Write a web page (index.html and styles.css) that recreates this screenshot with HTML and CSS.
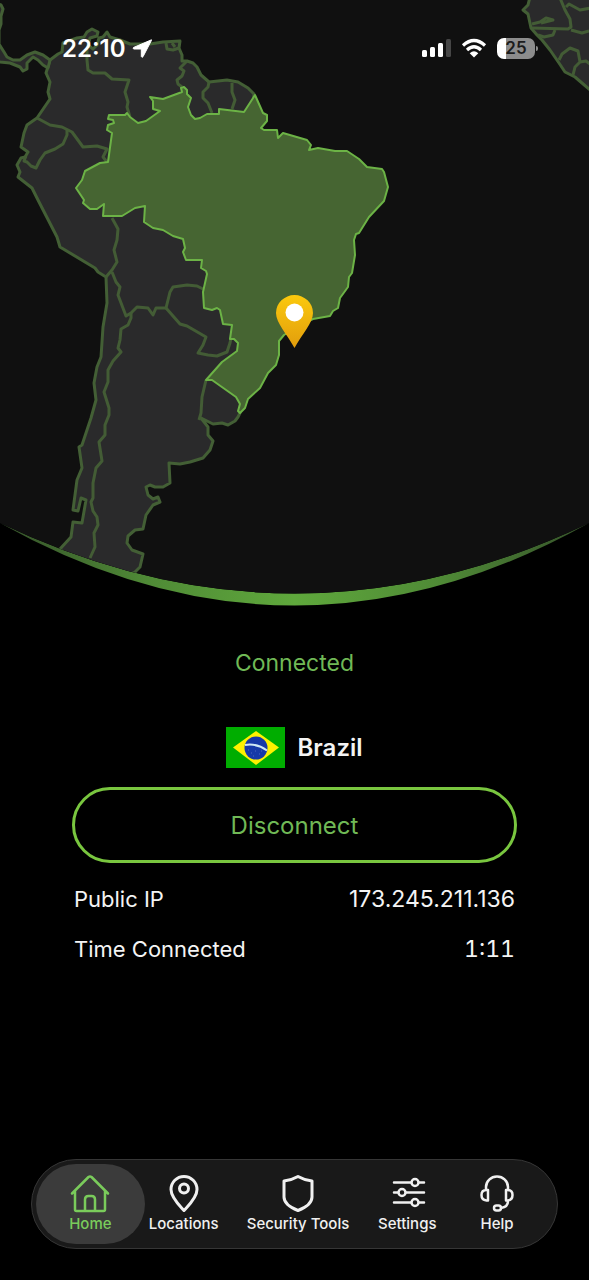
FILE: index.html
```html
<!DOCTYPE html>
<html lang="en">
<head>
    <meta charset="UTF-8">
    <meta name="viewport" content="width=device-width, initial-scale=1.0">
    <title>VPN</title>
    <link rel="stylesheet" href="styles.css">
</head>
<body>
    <header class="hero">
        <svg class="map" viewBox="0 0 589 606" aria-hidden="true">
            <defs>
                <clipPath id="dome">
                    <path d="M0 0H589V523Q294.500 664 0 523Z"/>
                </clipPath>
                <linearGradient id="rim" x1="0" x2="1" y1="0" y2="0">
                    <stop offset="0" stop-color="#35512a"/>
                    <stop offset=".25" stop-color="#4f8a36"/>
                    <stop offset=".5" stop-color="#5fa83c"/>
                    <stop offset=".75" stop-color="#4f8a36"/>
                    <stop offset="1" stop-color="#35512a"/>
                </linearGradient>
                <linearGradient id="gold" x1="0" x2="0" y1="0" y2="1">
                    <stop offset="0" stop-color="#fbc90d"/>
                    <stop offset="1" stop-color="#e29d0c"/>
                </linearGradient>
            </defs>
            <path class="rim" d="M0 523Q294.500 664 589 523Q294.500 688 0 523Z"/>
            <g clip-path="url(#dome)">
                <path class="sea" d="M0 0H589V606H0Z"/>
                <!-- mainland -->
                <path class="land" d="M50 60L58 54L62 52L63 43L77 38L84 37L87 32L92 29L98 32L97 36L90 38L88 45L93 49L97 45L99 38L103 37L107 32L110 37L120 40L130 44L150 44L163 42L180 41L179 48L182 55L182 61L187 61L193 63L197 67L201 75L209 82L218 81L227 80L238 82L248 88L254 94L250 130L240 413L238 417L235 421L228 425L222 423L213 424L207 421L201 418L208 427L208 435L213 441L210 450L203 458L190 462L180 464L169 463L170 483L163 487L155 487L150 485L146 487L148 495L153 499L158 497L160 502L153 505L146 515L143 529L135 530L128 536L127 543L132 550L143 554L140 567L135 572L100 590L60 549L71 537L73 522L82 523L86 500L81 498L78 511L73 510L77 480L82 468L79 447L82 445L91 418L96 400L94 383L97 367L101 357L103 327L107 303L106 277L98 272L95 268L60 247L57 237L38 200L32 188L18 177L20 172L17 165L21 158L25 157L28 152L21 147L24 133L27 125L37 118L50 99L48 92L50 82L46 73Z"/>
                <!-- Panama -->
                <path class="land" d="M-5 3L1 5L3 9L1 16L1 24L-1 30L-1 44L4 52L7 57L13 60L20 60L27 55L35 52L43 55L50 60L48 68L43 65L38 60L33 57L27 63L27 69L23 71L20 67L10 63L0 62L-5 60Z"/>
                <!-- West Africa -->
                <path class="land" d="M530 -3L528 5L523 10L528 14L531 28L537 35L542 40L550 50L559 63L565 72L575 77L582 83L595 94V-3Z"/>
                <g class="border">
                    <path d="M87 49L87 60L88 70L93 73L105 73L112 79L129 80L125 92L128 102L127 107L130 117"/>
                    <path d="M37 118L50 125L62 127L72 132L83 147L97 146L107 149L103 157L107 162"/>
                    <path d="M67 129L67 135L63 144L55 149L45 153L40 160L36 168L31 166L27 162L24 161L26 156"/>
                    <path d="M187 61L180 68L184 71L182 76L177 80L178 84L182 87"/>
                    <path d="M209 82L208 87L203 92L203 98L208 103L212 113"/>
                    <path d="M232 83L232 92L235 100L232 109"/>
                    <path d="M166 43L167 49L173 50L179 48M172 43L175 47"/>
                    <path d="M112 218L118 229L117 240L114 250L117 262L112 270L106 277"/>
                    <path d="M112 272L116 282L120 287L118 295L126 316L131 313L137 307L148 308L153 315L156 308L166 308L170 292L173 287L187 285L197 286L203 289"/>
                    <path d="M166 308L180 324L187 326L206 337L203 345L198 353L208 355L217 356L227 352L230 343L231 338"/>
                    <path d="M206 380L202 397L201 413L199 420"/>
                    <path d="M131 313L131 318L128 325L121 329L120 340L118 348L121 352L113 361L108 370L108 382L104 392L109 408L109 415L105 425L105 435L99 442L102 461L96 468L93 483L93 498L91 502L93 511L97 517L98 525L94 533L95 547L90 558"/>
                    <path d="M560 -2L565 10L570 19L571 27L568 29L532 28M571 30L582 33L589 31M566 7L569 4L580 10L591 8"/>
                    <path d="M532 24L540 22L546 18L553 20L541 23M538 35L544 37L553 35L555 30"/>
                    <path d="M559 60L562 54L570 48L578 51L580 62L575 67L573 75M580 62L586 61L591 65"/>
                </g>
                <!-- Brazil -->
                <path class="active" d="M150 97L163 99L182 92L181 88L184 87L187 90L187 94L191 98L188 107L191 115L195 119L200 118L207 114L219 114L219 109L244 112L255 95L263 113L267 115L267 121L261 128L264 130L277 130L278 138L283 133L307 140L311 145L309 150L318 148L335 151L347 151L359 159L367 167L382 169L384 172L388 187L384 201L369 217L359 233L356 234L354 240L355 255L352 273L349 277L348 287L340 298L338 308L333 311L330 316L313 319L300 325L284 335L279 341L279 355L276 365L268 373L260 388L248 399L245 408L240 413L238 411L240 404L236 397L212 380L206 380L222 362L237 351L238 343L234 339L230 339L232 325L223 324L220 310L217 308L212 310L204 308L203 292L205 283L207 274L206 271L201 268L202 260L186 260L183 252L185 248L183 239L173 236L163 230L153 228L144 222L145 206L135 208L122 216L103 216L104 204L97 209L90 209L83 203L84 200L76 188L82 180L85 171L100 163L108 162L112 133L107 130L108 125L114 123L113 120L108 119L109 115L125 115L127 113L130 117L138 123L146 121L160 111L153 109L153 101Z"/>
            </g>
            <path class="pin" d="M294.500 348C287 334 276 323 276 313A18.500 18 0 0 1 313 313C313 323 302 334 294.500 348Z"/>
            <circle cx="294.500" cy="312.500" r="9" fill="#fff"/>
        </svg>
        <div class="status">
            <div class="clock">
                <span>22:10</span>
                <svg width="20" height="20" viewBox="0 0 20 20"><path d="M19 2L1.500 9.500Q.5 10.800 2 11H9.300V18.500Q9.800 20 11 18.700L19.500 2.300Q19.800 1.500 19 2Z" fill="#fff" stroke="#fff"/></svg>
            </div>
            <div class="signals">
                <svg width="30" height="20" viewBox="0 0 30 20" fill="#fff">
                    <rect x="1" y="12" width="5" height="7" rx="1.500"/>
                    <rect x="9" y="9" width="5" height="10" rx="1.500"/>
                    <rect x="17" y="5" width="5" height="14" rx="1.500"/>
                    <rect x="25" y="1" width="5" height="18" rx="1.500" fill="#464646"/>
                </svg>
                <svg width="26" height="20" viewBox="0 0 26 20" fill="none" stroke="#fff" stroke-width="3.200">
                    <path d="M2 7.500Q13-2.500 24 7.500M6 12Q13 5.500 20 12"/>
                    <path d="M13 19.500L8.700 15.200Q13 11.500 17.300 15.200Z" fill="#fff" stroke="none"/>
                </svg>
                <span class="battery">25</span>
            </div>
        </div>
    </header>

    <main class="panel">
        <p class="state">Connected</p>
        <div class="country">
            <svg class="flag" viewBox="0 0 59 41" aria-hidden="true">
                <path d="M0 0H59V41H0Z" fill="#00ad00"/>
                <path d="M7 20.500L30 4L53 20.500L30 38Z" fill="#fdf100"/>
                <circle cx="30" cy="21" r="11.500" fill="#1639a8"/>
                <path d="M19 18Q31 16 41 23.500" fill="none" stroke="#cfe8f4" stroke-width="2"/>
                <path d="M22 23h1M25 26h1M29 24h1M33 27h1M27 29h1M35 24h1" stroke="#4a68c4"/>
            </svg>
            <h1>Brazil</h1>
        </div>
        <button class="disconnect" type="button">Disconnect</button>
        <dl class="details">
            <div class="row"><dt>Public IP</dt><dd>173.245.211.136</dd></div>
            <div class="row"><dt>Time Connected</dt><dd class="timer">1:11</dd></div>
        </dl>
    </main>

    <nav class="tabs">
        <a class="tab current" href="#home">
            <svg viewBox="0 0 40 40"><path d="M2 20.500L18.500 4Q20 3 21.500 4L38 20.500M5 18V36.500Q5 38 6.500 38H33.500Q35 38 35 36.500V18M15 38V26.500Q15 23 18.500 23H21.500Q25 23 25 26.500V38"/></svg>
            <span>Home</span>
        </a>
        <a class="tab" href="#locations">
            <svg viewBox="0 0 40 40"><path class="bold" d="M20 37.500C17 34 7 25 7 16.500A13 13 0 0 1 33 16.500C33 25 23 34 20 37.500Z"/><circle class="bold" cx="20" cy="15.500" r="4.500"/></svg>
            <span>Locations</span>
        </a>
        <a class="tab" href="#security">
            <svg viewBox="0 0 40 40"><path class="bold" d="M20 3.500Q26 7 34 8V24Q34 32 20 37.500Q6 32 6 24V8Q14 7 20 3.500Z"/></svg>
            <span>Security Tools</span>
        </a>
        <a class="tab" href="#settings">
            <svg viewBox="0 0 40 40"><path d="M7 9.500H24M32 9.500H37M7 19.500H11M19 19.500H37M7 29.500H24M32 29.500H37"/><circle cx="28" cy="9.500" r="3.500"/><circle cx="15" cy="19.500" r="3.500"/><circle cx="28" cy="29.500" r="3.500"/></svg>
            <span>Settings</span>
        </a>
        <a class="tab" href="#help">
            <svg viewBox="0 0 40 40"><path d="M9 17V14A11 10.500 0 0 1 31 14V17M11 17V27.500H9.500Q4.500 27 4.500 22Q4.500 17 9.500 17ZM29 17V27.500H30.500Q35.500 27 35.500 22Q35.500 17 30.500 17ZM31 28Q31 34 24 35"/><rect x="17" y="32.500" width="7" height="5" rx="2.500"/></svg>
            <span>Help</span>
        </a>
    </nav>
</body>
</html>
```
FILE: styles.css
```css
* {
    box-sizing: border-box;
}
body {
    margin: 0;
    min-height: 100vh;
    display: flex;
    flex-direction: column;
    background-color: #000;
    color: #f4f4f4;
    font-family: Inter, "Liberation Sans", sans-serif;
}

/* map */
.hero {
    position: relative;
}
.map {
    display: block;
    width: 100%;
}
.sea {
    fill: #101010;
}
.land {
    fill: #2a2a2b;
    stroke: #435f35;
    stroke-width: 3;
    stroke-linejoin: round;
}
.border {
    fill: none;
    stroke: #435c35;
    stroke-width: 3;
    stroke-linejoin: round;
}
.active {
    fill: #466532;
    stroke: #6cb346;
    stroke-width: 2;
    stroke-linejoin: round;
}
.rim {
    fill: url(#rim);
}
.pin {
    fill: url(#gold);
}

/* status bar lies over the map */
.status {
    position: absolute;
    top: 36px;
    left: 0;
    right: 0;
    display: flex;
    justify-content: space-between;
    padding: 0 54px 0 62px;
}
.clock,
.signals {
    display: flex;
    align-items: center;
    height: 24px;
}
.clock {
    gap: 6px;
    color: #fff;
    font-size: 24px;
    font-weight: 600;
}
.signals {
    gap: 10px;
}
.battery {
    position: relative;
    width: 38px;
    height: 21px;
    border-radius: 7px;
    background: linear-gradient(90deg, #fff 25%, #8c8c8c 25%);
    color: #1c1c1c;
    font-size: 17px;
    line-height: 21px;
    font-weight: 600;
    text-align: center;
}
.battery::after {
    content: "";
    position: absolute;
    top: 8px;
    right: -3px;
    width: 2px;
    height: 5px;
    border-radius: 0 2px 2px 0;
    background-color: #8c8c8c;
}

/* connection */
.panel {
    display: flex;
    flex-direction: column;
    padding: 43px 72px 24px;
}
.state {
    margin: 0 0 50px;
    color: #70b956;
    font-size: 23px;
    line-height: 28px;
    text-align: center;
}
.country {
    display: flex;
    justify-content: center;
    align-items: center;
    gap: 12px;
}
.flag {
    width: 59px;
    height: 41px;
}
h1 {
    margin: 0;
    font-size: 24px;
    line-height: 30px;
    font-weight: 600;
}
.disconnect {
    height: 76px;
    margin: 19px 0 21px;
    border: 3px solid #79c63f;
    border-radius: 38px;
    background-color: transparent;
    color: #70b956;
    font-family: inherit;
    font-size: 24px;
    cursor: pointer;
}
.details {
    display: flex;
    flex-direction: column;
    gap: 20px;
    margin: 0;
    padding: 0 2px;
    font-size: 23px;
    line-height: 30px;
}
.row {
    display: flex;
    justify-content: space-between;
}
.row dt {
    font-size: 22px;
}
.row dd {
    margin: 0;
}
.timer {
    font-variant-numeric: tabular-nums;
}

/* tab bar */
.tabs {
    display: grid;
    grid-template-columns: 109fr 78fr 151fr 68fr 112fr;
    margin: auto 31px 31px;
    padding: 4px;
    border: 1px solid #363636;
    border-radius: 45px;
    background-color: #191919;
}
.tab {
    display: flex;
    flex-direction: column;
    align-items: center;
    height: 80px;
    padding-top: 9px;
    border-radius: 40px;
    color: #f0f0f0;
    font-size: 15px;
    line-height: 20px;
    font-weight: 500;
    text-decoration: none;
    white-space: nowrap;
}
.tab svg {
    width: 40px;
    height: 40px;
    margin-bottom: 1px;
    fill: none;
    stroke: currentColor;
    stroke-width: 2.5;
    stroke-linecap: round;
    stroke-linejoin: round;
}
.tab .bold {
    stroke-width: 3;
}
.current {
    background-color: #3b3b3b;
    color: #7acb5b;
}
```
